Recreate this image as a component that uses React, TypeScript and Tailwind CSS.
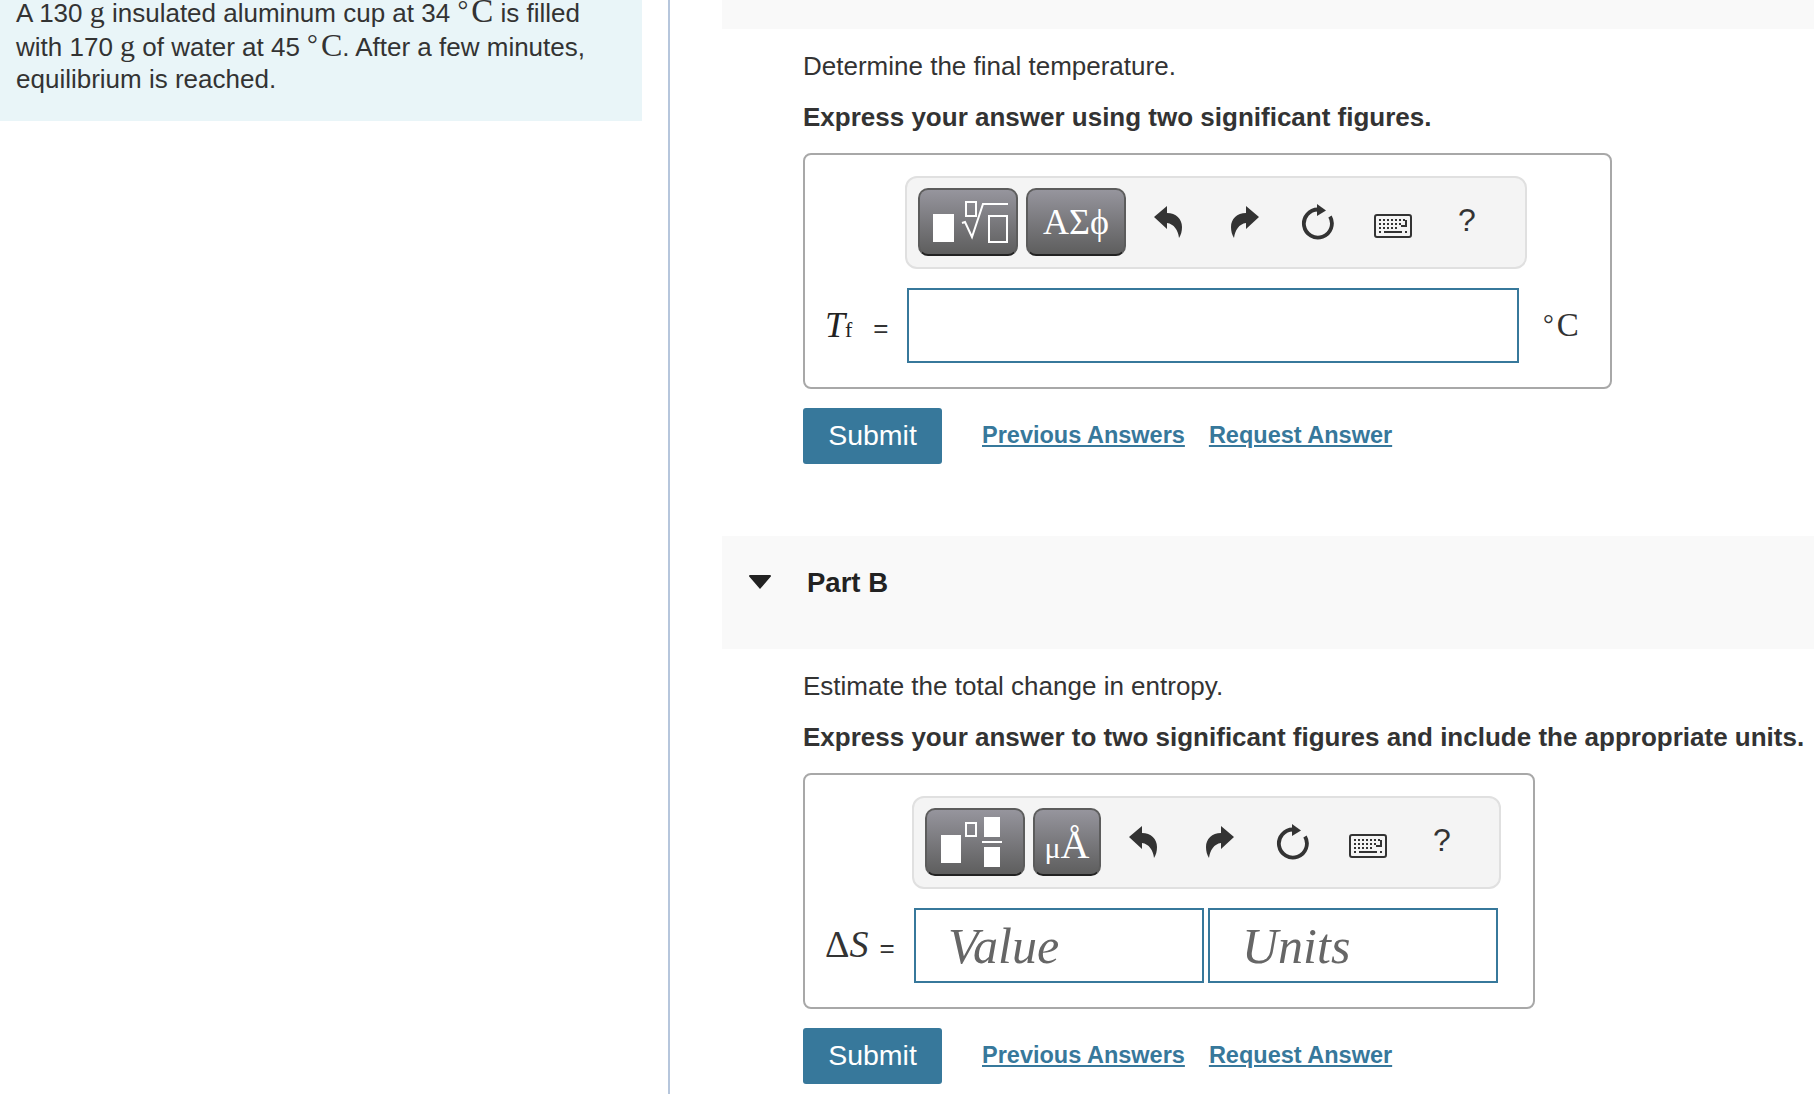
import type { ReactNode } from 'react'

const sans = "font-['Liberation_Sans',Arial,sans-serif]"
const serif = "font-['Liberation_Serif','Times_New_Roman',serif]"

function Deg({ big = false }: { big?: boolean }) {
  return (
    <span className={`${serif} whitespace-nowrap leading-none`}>
      <span className="relative -top-[3px] text-[27px] leading-none">°</span>
      <span className={big ? 'ml-[3px] text-[33px] leading-none' : 'ml-[3px] text-[32px] leading-none'}>C</span>
    </span>
  )
}

function UndoIcon({ flip = false }: { flip?: boolean }) {
  return (
    <svg width="28" height="32" viewBox="0 0 28 32" className={flip ? '-scale-x-100' : ''} fill="#333">
      <path d="M0 11 13 0v7c9 0 15 6 15 14 0 4-1 8-3 11-1-8-5-14-12-15v6z" />
    </svg>
  )
}

function ResetIcon() {
  return (
    <svg width="35" height="36" viewBox="0 0 35 36" fill="none">
      <path d="M18 5.5A14 14 0 1 0 30 12.5" stroke="#333" strokeWidth="3.8" />
      <path d="M17 0l9 6.5-9 5.5z" fill="#333" />
    </svg>
  )
}

function KeyboardIcon() {
  return (
    <svg width="38" height="24" viewBox="0 0 38 24" fill="none">
      <rect x="1" y="1" width="36" height="22" rx="2" stroke="#333" strokeWidth="2" />
      <path
        d="M5 6h2M9 6h2M13 6h2M17 6h2M21 6h2M25 6h2M29 6h2M5 10h2M9 10h2M13 10h2M17 10h2M21 10h2M25 10h2M32 6v6h-5M5 14h2M9 14h2M13 14h2M17 14h2M21 14h2M5 18h2M10 18h18M31 18h2"
        stroke="#333"
        strokeWidth="2"
      />
    </svg>
  )
}

function ToolButton({ width, children }: { width: string; children: ReactNode }) {
  return (
    <div
      className={`${width} flex h-[68px] items-center justify-center rounded-[10px] border-2 border-[#5c5c5c] border-b-[#222222] bg-gradient-to-b from-[#96959d] to-[#5e5e5e] text-white`}
    >
      {children}
    </div>
  )
}

function Toolbar({ className, first, second }: { className: string; first: ReactNode; second: ReactNode }) {
  const slot = 'flex w-[74px] items-center justify-center'
  return (
    <div
      className={`${className} flex h-[93px] items-center rounded-[12px] border-2 border-[#e0e0e0] bg-[#f4f4f4] pb-[2px] pl-[11px]`}
    >
      <div className="flex gap-[8px]">
        {first}
        {second}
      </div>
      <div className="ml-[5px] flex items-center">
        <span className={slot}>
          <UndoIcon />
        </span>
        <span className={`${slot} ml-[3px]`}>
          <UndoIcon flip />
        </span>
        <span className={`${slot} pr-[3px]`}>
          <ResetIcon />
        </span>
        <span className={`${slot} pt-[8px]`}>
          <KeyboardIcon />
        </span>
        <span className={`${slot} pb-[4px] text-[32px] text-[#333]`}>?</span>
      </div>
    </div>
  )
}

function RootIcon() {
  return (
    <svg width="78" height="42" viewBox="0 0 78 42" fill="none" stroke="#fff" className="ml-[6px]">
      <rect x="1" y="13" width="21" height="28" fill="#fff" stroke="none" />
      <rect x="34" y="1" width="10" height="14" strokeWidth="2" />
      <path d="M30 22l3-1 7 15 11-33h25" strokeWidth="2" />
      <rect x="57" y="15" width="18" height="26" strokeWidth="2" />
    </svg>
  )
}

function FractionIcon() {
  return (
    <svg width="61" height="50" viewBox="0 0 61 50" fill="#fff" className="mr-[7px]">
      <rect x="0" y="18" width="20" height="28" />
      <rect x="25" y="6" width="10" height="13" fill="none" stroke="#fff" strokeWidth="2" />
      <rect x="43" y="0" width="16" height="20" />
      <rect x="41" y="24" width="20" height="2" />
      <rect x="43" y="30" width="16" height="20" />
    </svg>
  )
}

function Actions() {
  return (
    <div className="mt-[19px] flex items-center">
      <button className="h-[56px] w-[139px] rounded-[3px] bg-[#37789b] pb-[2px] text-[28.5px] text-white">Submit</button>
      <a className="mb-[2px] ml-[40px] text-[23.5px] font-bold text-[#37789b] underline decoration-2 underline-offset-2">
        Previous Answers
      </a>
      <a className="mb-[2px] ml-[24px] text-[23.5px] font-bold text-[#37789b] underline decoration-2 underline-offset-2">
        Request Answer
      </a>
    </div>
  )
}

export default function App() {
  return (
    <div className={`${sans} flex h-[1094px] w-full overflow-hidden bg-white text-[26px] leading-[32px] text-[#333]`}>
      <aside className="h-full w-[670px] shrink-0 border-r-2 border-[#b6c6dc]">
        <div className="flow-root h-[121px] w-[642px] bg-[#e9f5f8] pl-[16px]">
          <p className="-mt-[5px] w-[600px]">
            A 130 <span className={`${serif} text-[30px] leading-none`}>g</span> insulated aluminum cup at 34 <Deg big /> is
            filled with 170 <span className={`${serif} text-[30px] leading-none`}>g</span> of water at 45 <Deg />. After a
            few minutes, equilibrium is reached.
          </p>
        </div>
      </aside>

      <main className="ml-[52px] min-w-0 flex-1">
        <div className="h-[29px] bg-[#f9f9f9]" />
        <section className="pl-[81px]">
          <p className="mt-[21px]">Determine the final temperature.</p>
          <p className="mt-[19px] whitespace-nowrap font-bold">Express your answer using two significant figures.</p>
          <div className="mt-[20px] h-[236px] w-[809px] rounded-[8px] border-2 border-[#a8a8a8] pt-[21px]">
            <Toolbar
              className="ml-[100px] w-[622px]"
              first={
                <ToolButton width="w-[100px]">
                  <RootIcon />
                </ToolButton>
              }
              second={
                <ToolButton width="w-[100px]">
                  <span className={`${serif} text-[36px] leading-none`}>ΑΣϕ</span>
                </ToolButton>
              }
            />
            <div className="mt-[19px] flex items-center">
              <div className={`${serif} flex w-[102px] items-baseline pl-[20px] pt-[2px] text-[#222]`}>
                <span className="text-[36px] italic">T</span>
                <span className="text-[22px] leading-none">f</span>
                <span className={`${sans} ml-[21px] text-[26px] text-[#333]`}>=</span>
              </div>
              <input className="h-[75px] w-[612px] border-2 border-[#37789b] bg-white outline-none" />
              <span className="ml-[24px] text-[#333]">
                <Deg big />
              </span>
            </div>
          </div>
          <Actions />
        </section>

        <header className="mt-[72px] flex h-[113px] items-start bg-[#f9f9f9] pl-[27px] pt-[31px]">
          <svg width="22" height="14" viewBox="0 0 22 14" className="mt-[8px]" fill="#222">
            <path d="M1 0h20a1 1 0 0 1 .8 1.6L11 14 .2 1.6A1 1 0 0 1 1 0z" />
          </svg>
          <h2 className="ml-[36px] text-[27.5px] font-bold text-[#222]">Part B</h2>
        </header>

        <section className="pl-[81px]">
          <p className="mt-[21px]">Estimate the total change in entropy.</p>
          <p className="mt-[19px] whitespace-nowrap font-bold">
            Express your answer to two significant figures and include the appropriate units.
          </p>
          <div className="mt-[20px] h-[236px] w-[732px] rounded-[8px] border-2 border-[#a8a8a8] pt-[21px]">
            <Toolbar
              className="ml-[107px] w-[589px]"
              first={
                <ToolButton width="w-[100px]">
                  <FractionIcon />
                </ToolButton>
              }
              second={
                <ToolButton width="w-[68px]">
                  <span className={`${serif} flex items-baseline pt-[6px] leading-none`}>
                    <span className="text-[30px]">μ</span>
                    <span className="text-[40px]">Å</span>
                  </span>
                </ToolButton>
              }
            />
            <div className="mt-[19px] flex items-center">
              <div className={`${serif} flex w-[109px] items-baseline pl-[20px] text-[#333]`}>
                <span className="text-[38px]">Δ</span>
                <span className="text-[38px] italic">S</span>
                <span className={`${sans} ml-[11px] text-[26px]`}>=</span>
              </div>
              <input
                placeholder="Value"
                className={`${serif} h-[75px] w-[290px] border-2 border-[#37789b] bg-white pl-[32px] text-[50px] italic outline-none placeholder:text-[#666]`}
              />
              <input
                placeholder="Units"
                className={`${serif} ml-[4px] h-[75px] w-[290px] border-2 border-[#37789b] bg-white pl-[32px] text-[50px] italic outline-none placeholder:text-[#666]`}
              />
            </div>
          </div>
          <Actions />
        </section>
      </main>
    </div>
  )
}
